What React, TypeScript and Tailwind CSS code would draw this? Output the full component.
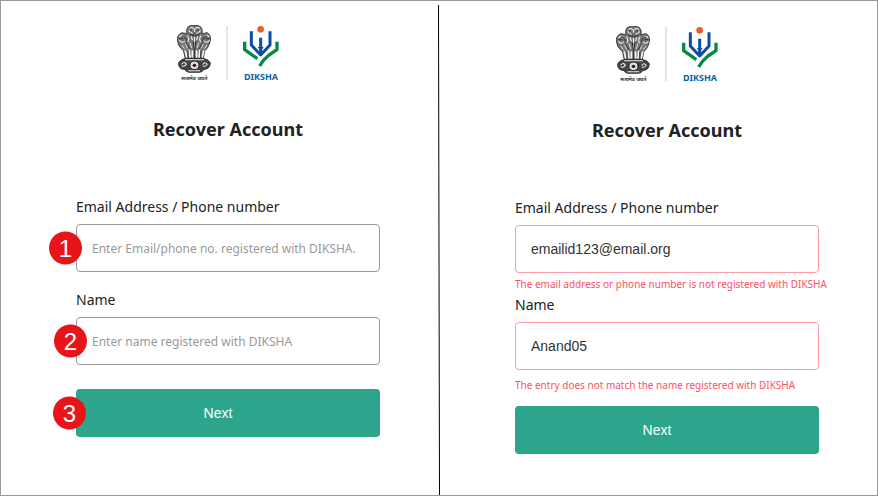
import React from "react";

function Emblem() {
  return (
    <svg viewBox="21 21 102 168" className="h-[56px] w-[34px]" role="img" aria-label="State Emblem of India">
      <g transform="translate(-4 0) scale(1.06 1)">
        <g fill="#777777" stroke="#2a2a2a" strokeWidth="2.5" strokeLinejoin="round">
          <path d="M55 26Q72 16 90 26Q98 36 94 47L109 44Q121 52 118 68Q114 84 109 91L102 98L98 122H47L42 98L35 91Q27 84 25 68Q22 52 37 44L52 47Q48 36 55 26Z" />
          <path d="M28 134Q36 122 50 121H96Q110 122 118 134Q118 148 109 152L99 155Q96 162 88 163H57Q50 162 46 155L35 152Q27 146 28 134Z" fill="#444444" />
        </g>
        <g fill="none" stroke="#f2f2f2" strokeWidth="3" strokeLinecap="round">
          <path d="M60 31Q67 26 70 32M76 32Q82 26 88 31M63 43Q73 51 84 43M57 38L60 41M90 38L87 41M73 34V40" />
          <path d="M31 56Q38 48 43 56M31 68Q38 77 46 69M103 56Q108 48 114 56M100 69Q107 77 115 68" />
          <path d="M54 54Q59 62 55 71M91 54Q85 62 90 71M64 56L67 66M82 56L79 66M73 58V72" />
          <path d="M38 82L44 91M48 77L53 90M61 75L65 89M73 80V92M85 75L81 89M97 77L93 90M108 82L102 91" strokeWidth="2.5" />
          <path d="M47 99L51 117M58 96L60 117M67 99V117M79 99V117M88 96L86 117M99 99L95 117" strokeWidth="5" />
          <path d="M48 125H99M37 138Q45 129 50 139Q45 147 38 144M97 139Q103 129 109 139Q106 146 98 144M57 158H88" />
        </g>
        <g fill="none" stroke="#222222" strokeWidth="2.5">
          <path d="M58 49Q73 57 88 49M48 73Q56 84 60 93M97 73Q91 84 86 93M69 68L73 96L78 68M55 97V120M73 97V120M91 97V120" />
          <path d="M30 62H41M104 62H115M61 36H66M80 36H85M38 53Q51 58 50 70M95 70Q96 57 108 53M68 47H78" />
        </g>
        <circle cx="73" cy="142" r="13" fill="#f2f2f2" stroke="#222222" strokeWidth="3" />
        <path d="M73 131V153M62 142H84M65 134L81 150M81 134L65 150" stroke="#777777" strokeWidth="1" />
        <circle cx="73" cy="142" r="5" fill="#222222" />
      </g>
      <text x="73" y="185" textAnchor="middle" fill="#333333" className="font-['Noto_Sans',sans-serif] text-[15px] font-bold">
        सत्यमेव जयते
      </text>
    </svg>
  );
}

function DikshaLogo() {
  return (
    <div className="flex w-9 flex-col items-center">
      <svg viewBox="0 0 108 129" className="h-[43px] w-9" aria-hidden="true">
        <circle cx="53" cy="13" r="10" fill="#f15a29" />
        <g fill="none" strokeWidth="9" strokeLinejoin="round">
          <path d="M5 50V74L43 101M102 50V74L78 90Q60 104 50 123" stroke="#078943" strokeWidth="10" />
          <path d="M25 19V60L53 90L81 60V19M53 38V90" stroke="#0d4da1" />
          <path d="M44 66H62L53 78Z" fill="#0d4da1" />
        </g>
      </svg>
      <span className="mt-[3px] font-['Noto_Sans',sans-serif] text-[9px] leading-3 font-bold text-[#0864a8]">DIKSHA</span>
    </div>
  );
}

function Header() {
  return (
    <header className="flex flex-col items-center">
      <div className="flex h-14 items-start">
        <Emblem />
        <div className="mr-[15px] ml-[15px] mt-px h-[54px] w-[2px] bg-[#e5e5e5]" />
        <DikshaLogo />
      </div>
      <h1 className="mt-[34px] text-lg leading-7 font-bold">Recover Account</h1>
    </header>
  );
}

function Step({ n, place }: { n: number; place: string }) {
  return (
    <span className={`absolute top-1/2 flex size-[33px] -translate-y-1/2 items-center justify-center rounded-full bg-[#e91419] font-['Liberation_Sans',sans-serif] text-2xl text-white ${place}`}>
      {n}
    </span>
  );
}

type FieldProps = {
  id: string;
  label: string;
  placeholder?: string;
  value?: string;
  error?: string;
  errorGap?: string;
  children?: React.ReactNode;
};

function Field({ id, label, placeholder, value, error, errorGap = "mt-[3px] mb-px", children }: FieldProps) {
  return (
    <div className="flex flex-col">
      <label htmlFor={id} className="text-sm leading-5">{label}</label>
      <div className="relative mt-[7px]">
        <input
          id={id}
          type="text"
          defaultValue={value}
          placeholder={placeholder}
          aria-invalid={error ? true : undefined}
          aria-describedby={error ? `${id}-error` : undefined}
          className={`block h-12 w-full rounded border bg-white px-[15px] outline-none placeholder:text-[#999999] ${
            error
              ? "border-[#ff9ba8] font-['Liberation_Sans',sans-serif] text-sm text-[#333333]"
              : "border-[#999999] text-xs"
          }`}
        />
        {children}
      </div>
      {error && (
        <p id={`${id}-error`} className={`text-[10px] leading-4 whitespace-nowrap text-[#ff4f65] ${errorGap}`}>{error}</p>
      )}
    </div>
  );
}

function NextButton() {
  return (
    <button type="submit" className="block h-12 w-full rounded bg-[#2da58c] pr-5 font-['Liberation_Sans',sans-serif] text-sm text-white">
      Next
    </button>
  );
}

export default function App() {
  return (
    <main className="relative grid min-h-screen grid-cols-2 border border-[#999999] bg-white font-['Noto_Sans',sans-serif] text-[#222222]">
      <section className="flex flex-col items-center pt-6 pl-4">
        <Header />
        <form className="mt-[54px] w-[304px] max-w-full" onSubmit={(e) => e.preventDefault()}>
          <div className="flex flex-col gap-[18px]">
            <Field id="contact" label="Email Address / Phone number" placeholder="Enter Email/phone no. registered with DIKSHA.">
              <Step n={1} place="-left-[27px]" />
            </Field>
            <Field id="name" label="Name" placeholder="Enter name registered with DIKSHA">
              <Step n={2} place="-left-[22px]" />
            </Field>
          </div>
          <div className="relative mt-6">
            <NextButton />
            <Step n={3} place="-left-[23px]" />
          </div>
        </form>
      </section>

      <section className="flex flex-col items-center pt-[25px] pl-[18px]">
        <Header />
        <form className="mt-[54px] w-[304px] max-w-full" onSubmit={(e) => e.preventDefault()}>
          <div className="flex flex-col gap-[2px]">
            <Field
              id="contact-checked"
              label="Email Address / Phone number"
              value="emailid123@email.org"
              error="The email address or phone number is not registered with DIKSHA"
            />
            <Field
              id="name-checked"
              label="Name"
              value="Anand05"
              error="The entry does not match the name registered with DIKSHA"
              errorGap="mt-[7px] mb-px"
            />
          </div>
          <div className="mt-3">
            <NextButton />
          </div>
        </form>
      </section>

      <svg viewBox="0 0 2 490" preserveAspectRatio="none" className="absolute top-1 bottom-0 left-1/2 h-[calc(100%-4px)] w-[2px] -translate-x-1/2" aria-hidden="true">
        <path d="M0.5 0L1.5 490" stroke="#000000" strokeWidth="1" />
      </svg>
    </main>
  );
}
